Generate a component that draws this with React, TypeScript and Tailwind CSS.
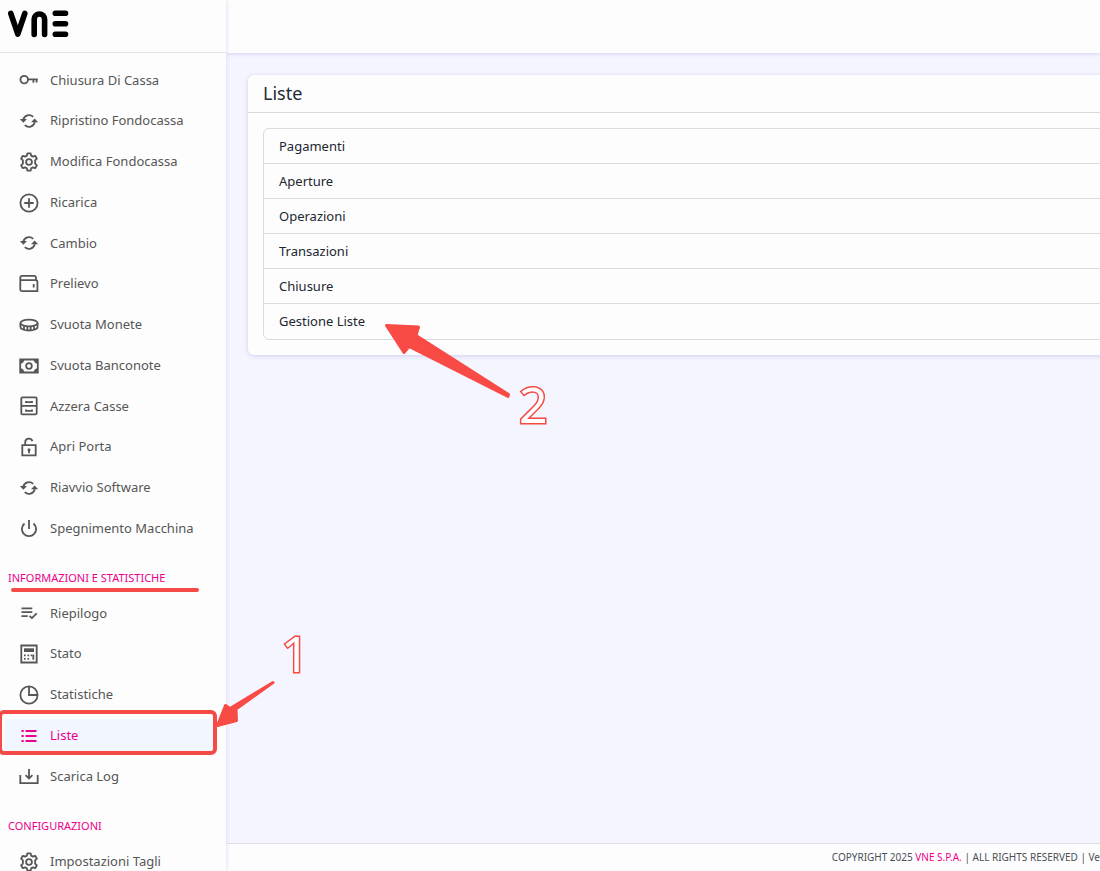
import type { ReactNode } from "react";

type Item = { label: string; icon: ReactNode; active?: boolean };

function Icon({ children }: { children: ReactNode }) {
    return (
        <svg viewBox="0 0 20 20" className="size-5 shrink-0" fill="none" stroke="currentColor" strokeWidth="1.8" aria-hidden="true">
            {children}
        </svg>
    );
}

const KeyIcon = (
    <Icon>
        <circle cx="5.2" cy="9.6" r="3.8" />
        <path d="M9 9.3h9.8M14.4 9.3v3.5M17.6 9.3v3.2" />
    </Icon>
);
const LoopIcon = (
    <Icon>
        <path d="M4.2 8.9A6 6 0 0 1 14.2 5.8M15.8 11.1A6 6 0 0 1 5.8 14.2" />
        <path d="M.8 8h7.2L4.4 11.8zM12 11.2h7.2L15.6 7.4z" fill="currentColor" stroke="none" />
    </Icon>
);
const GearIcon = (
    <Icon>
        <path d="M7.9 3.6 8.4 1.3h3.2l.5 2.3 1.8 1 2.3-.8 1.7 2.9-1.8 1.7v3.2l1.8 1.7-1.7 2.9-2.3-.8-1.8 1-.5 2.3H8.4L7.9 16.4l-1.8-1-2.3.8-1.7-2.9 1.8-1.7V8.4L2.1 6.7l1.7-2.9 2.3.8z" strokeLinejoin="round" />
        <circle cx="10" cy="10" r="2.9" />
    </Icon>
);
const PlusIcon = (
    <Icon>
        <circle cx="10" cy="10" r="8.6" />
        <path d="M10 5.3v9.4M5.3 10h9.4" />
    </Icon>
);
const WalletIcon = (
    <Icon>
        <path d="M1.3 6.2h15.4a1.7 1.7 0 0 1 1.7 1.7v9.3H3A1.7 1.7 0 0 1 1.3 15.5V3.6A1.7 1.7 0 0 1 3 1.9h12.2a1.7 1.7 0 0 1 1.7 1.7v2.6M14.7 10v3.5" />
    </Icon>
);
const CoinIcon = (
    <Icon>
        <ellipse cx="10" cy="8" rx="8.6" ry="3.4" />
        <path d="M1.4 8v4c0 2 3.8 3.5 8.6 3.5s8.6-1.5 8.6-3.5V8M5 11.3v3M8.4 12v3.3M11.7 12v3.3M15 11.3v3" />
    </Icon>
);
const CashIcon = (
    <Icon>
        <path d="M1.2 3.5h17.6v13H1.2z" />
        <circle cx="10" cy="10" r="2.8" />
        <path d="M1 3.3h4.4A4.4 4.4 0 0 1 1 7.7zM19 3.3h-4.4A4.4 4.4 0 0 0 19 7.7zM1 16.7h4.4A4.4 4.4 0 0 0 1 12.3zM19 16.7h-4.4a4.4 4.4 0 0 1 4.4-4.4z" fill="currentColor" stroke="none" />
    </Icon>
);
const DrawerIcon = (
    <Icon>
        <rect x="2.3" y="1.4" width="15.4" height="17" rx="1.2" />
        <path d="M2.3 9.9h15.4M7 4.9v1.3h6V4.9M7 13.5v1.3h6v-1.3" />
    </Icon>
);
const UnlockIcon = (
    <Icon>
        <path d="M3.3 8.2h13.4v10.2H3.3zM6.2 8.2V5.3a3.7 3.7 0 0 1 7.2-1.2M10 13v3.2" />
        <circle cx="10" cy="12.7" r="1.5" fill="currentColor" stroke="none" />
    </Icon>
);
const PowerIcon = (
    <Icon>
        <path d="M10 1v9M5.5 4.5a7.1 7.1 0 1 0 9 0" />
    </Icon>
);
const SummaryIcon = (
    <Icon>
        <path d="M2.5 5.3h10.8M2.5 9.2h10.8M2.5 13.1h6.2M10.5 12.8l2.4 2.3 4.8-4.8" />
    </Icon>
);
const CalculatorIcon = (
    <Icon>
        <path d="M2.3 1.5h15.4v17H2.3z" />
        <path d="M5 4.3h10V8H5z" fill="currentColor" stroke="none" />
        <path d="M5 11.3h1.7M8.5 11.3h1.7M11.7 11.3h1.5M5 14.8h1.7M8.5 14.8h1.7M14.3 10.4v5.3" />
    </Icon>
);
const ChartIcon = (
    <Icon>
        <circle cx="10" cy="10" r="8.6" />
        <path d="M10 1.5V10h8.5" />
    </Icon>
);
const ListIcon = (
    <Icon>
        <path d="M2.5 5h2.2M6.5 5h11M2.5 10h2.2M6.5 10h11M2.5 15h2.2M6.5 15h11" strokeWidth="2" />
    </Icon>
);
const DownloadIcon = (
    <Icon>
        <path d="M1.3 8v8.2h17.4V8M10 2v9.5M6.6 8.2 10 11.6l3.4-3.4" />
    </Icon>
);

const operations: Item[] = [
    { label: "Chiusura Di Cassa", icon: KeyIcon },
    { label: "Ripristino Fondocassa", icon: LoopIcon },
    { label: "Modifica Fondocassa", icon: GearIcon },
    { label: "Ricarica", icon: PlusIcon },
    { label: "Cambio", icon: LoopIcon },
    { label: "Prelievo", icon: WalletIcon },
    { label: "Svuota Monete", icon: CoinIcon },
    { label: "Svuota Banconote", icon: CashIcon },
    { label: "Azzera Casse", icon: DrawerIcon },
    { label: "Apri Porta", icon: UnlockIcon },
    { label: "Riavvio Software", icon: LoopIcon },
    { label: "Spegnimento Macchina", icon: PowerIcon },
];

const statistics: Item[] = [
    { label: "Riepilogo", icon: SummaryIcon },
    { label: "Stato", icon: CalculatorIcon },
    { label: "Statistiche", icon: ChartIcon },
    { label: "Liste", icon: ListIcon, active: true },
    { label: "Scarica Log", icon: DownloadIcon },
];

const lists = ["Pagamenti", "Aperture", "Operazioni", "Transazioni", "Chiusure", "Gestione Liste"];

function NavLink({ label, icon, active }: Item) {
    return (
        <a
            href="#"
            aria-current={active ? "page" : undefined}
            className={
                active
                    ? "my-1 ml-1 mr-3 flex items-center gap-[11px] rounded bg-[#f2f7ff] pl-[15px] text-[#ec008c]"
                    : "flex items-center gap-[11px] pl-[19px] text-[#565656]"
            }
        >
            {icon}
            <span className="whitespace-nowrap text-[13px]">{label}</span>
        </a>
    );
}

function NavTitle({ children }: { children: ReactNode }) {
    return <h2 className="h-11 pl-2 pt-[21px] text-[11px] leading-4 text-[#ec008c]">{children}</h2>;
}

function Logo() {
    return (
        <svg viewBox="0 0 62 28" className="h-7 w-[62px]" fill="none" stroke="#000" strokeWidth="5.6" strokeLinecap="round" role="img" aria-label="VNE">
            <path d="M2.8 3.5 9.8 24 16.8 3.5" strokeLinejoin="round" />
            <path d="M26.2 24.5V9.2a5.2 5.2 0 0 1 10.4 0v15.3" />
            <path d="M47.3 3.2h10.2M47.3 13.7h10.2M47.3 24.2h10.2" />
        </svg>
    );
}

function Annotations() {
    return (
        <div className="pointer-events-none absolute inset-0 z-20 overflow-hidden">
            <div className="absolute left-[11px] top-[588px] h-1 w-[188px] rounded-full bg-[#f54a45]" />
            <div className="absolute left-[-2px] top-[710px] h-[45px] w-[219px] rounded-md border-4 border-[#f54a45]" />
            <svg className="absolute left-0 top-0 h-[871px] w-[560px]" fill="#f84b46" stroke="#f84b46" strokeWidth="3" strokeLinejoin="round">
                <path d="M386.5 325.5 418.5 327 416 335.5 508.5 394.5 508 396.5 409 346.5 404 352.5z" />
                <path d="M273 682.5 236 709 236.5 720.5 217.5 725.5 225.5 705.5 230 708.5z" />
            </svg>
            <span className="absolute left-[519px] top-[376px] text-[50px] leading-[56px] text-white [-webkit-text-stroke:3px_#f54a45] [paint-order:stroke_fill]">
                2
            </span>
            <span className="absolute left-[281px] top-[625px] text-[50px] leading-[56px] text-white [-webkit-text-stroke:3px_#f54a45] [paint-order:stroke_fill]">
                1
            </span>
        </div>
    );
}

export default function App() {
    return (
        <div className="relative flex h-screen overflow-hidden bg-[#f5f5ff] font-['Noto_Sans',sans-serif]">
            <aside className="z-10 flex w-[226px] shrink-0 flex-col bg-[#fdfdfd] shadow-[0_0_4px_#d5d5f5]">
                <div className="flex h-[53px] shrink-0 items-center border-b border-[#e2e2e6] pb-1 pl-2">
                    <Logo />
                </div>
                <nav className="pt-[7px]">
                    <div className="grid min-h-[489px] auto-rows-fr">
                        {operations.map((item) => (
                            <NavLink key={item.label} {...item} />
                        ))}
                    </div>
                    <NavTitle>INFORMAZIONI E STATISTICHE</NavTitle>
                    <div className="grid min-h-[204px] auto-rows-fr">
                        {statistics.map((item) => (
                            <NavLink key={item.label} {...item} />
                        ))}
                    </div>
                    <NavTitle>CONFIGURAZIONI</NavTitle>
                    <div className="grid min-h-[41px] auto-rows-fr">
                        <NavLink label="Impostazioni Tagli" icon={GearIcon} />
                    </div>
                </nav>
            </aside>

            <div className="flex min-w-0 flex-1 flex-col">
                <header className="h-[53px] shrink-0 bg-[#fdfdfd] shadow-[0_1px_4px_#d0d0f2]" />
                <main className="flex-1 overflow-hidden pl-[22px] pt-[22px]">
                    <section className="-mr-8 rounded-md bg-[#fdfdfd] shadow-[0_1px_5px_#cdcdf0]">
                        <h1 className="h-[38px] border-b border-[#d8dade] pl-[15px] text-lg leading-9 text-[#212b36]">Liste</h1>
                        <div className="p-[15px]">
                            <ul className="rounded-md border border-[#d8dbe0]">
                                {lists.map((name) => (
                                    <li key={name} className="h-[35px] border-b border-[#d8dbe0] last:border-b-0">
                                        <a href="#" className="block pl-[15px] text-[13px] leading-[35px] text-[#212631]">
                                            {name}
                                        </a>
                                    </li>
                                ))}
                            </ul>
                        </div>
                    </section>
                </main>
                <footer className="flex h-7 shrink-0 items-center justify-end overflow-hidden border-t border-[#dcdee4] bg-[#fdfdfd]">
                    <p className="whitespace-nowrap text-[10px] text-[#4a4f57]">
                        COPYRIGHT 2025 <a href="#" className="text-[#ec008c]">VNE S.P.A.</a> | ALL RIGHTS RESERVED | Ve
                    </p>
                </footer>
            </div>

            <Annotations />
        </div>
    );
}
